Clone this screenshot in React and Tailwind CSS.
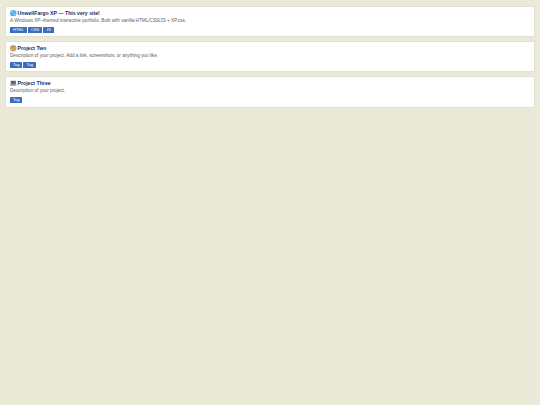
const PROJECTS = [
  {
    title: 'UnwellFargo XP — This very site!',
    icon: 'globe',
    text: 'A Windows XP–themed interactive portfolio. Built with vanilla HTML/CSS/JS + XP.css.',
    tags: ['HTML', 'CSS', 'JS'],
  },
  {
    title: 'Project Two',
    icon: 'palette',
    text: 'Description of your project. Add a link, screenshots, or anything you like.',
    tags: ['Tag', 'Tag'],
  },
  {
    title: 'Project Three',
    icon: 'laptop',
    text: 'Description of your project.',
    tags: ['Tag'],
  },
]

function ProjectIcon({ name }) {
  if (name === 'globe') {
    return (
      <svg width="6.5" height="6.5" viewBox="0 0 16 16">
        <circle cx="8" cy="8" r="8" fill="#5aa9e6" />
        <path d="M3 4l4-2 2 2-2 3-3 1zM9 9l4-1 1 2-3 4-2-2z" fill="#8fd0f0" />
      </svg>
    )
  }
  if (name === 'palette') {
    return (
      <svg width="6.5" height="6.5" viewBox="0 0 16 16">
        <circle cx="8" cy="8" r="8" fill="#e0a060" />
        <circle cx="5" cy="5" r="2" fill="#c96a4a" />
        <circle cx="10" cy="4" r="1.6" fill="#5f8fc0" />
        <circle cx="12" cy="9" r="1.6" fill="#7fae5a" />
      </svg>
    )
  }
  return (
    <svg width="6.5" height="6.5" viewBox="0 0 16 16">
      <rect x="2" y="2" width="12" height="9" fill="#3a4250" />
      <rect x="3" y="3" width="10" height="7" fill="#5a6a80" />
      <rect x="0" y="11" width="16" height="3" fill="#8a909a" />
    </svg>
  )
}

function ProjectCard({ project }) {
  return (
    <section className="flex h-[31.5px] flex-col border border-[#e2e0d2] bg-white px-[4px] pt-[3px]">
      <h2 className="flex h-[7px] items-center gap-[1px] text-[5.2px] font-bold leading-[7px] text-[#1a2a62]">
        <ProjectIcon name={project.icon} />
        {project.title}
      </h2>
      <p className="mt-[1.25px] text-[4.65px] leading-[6px] text-[#5c5c5c]">{project.text}</p>
      <div className="mt-[2.75px] flex gap-[1px]">
        {project.tags.map((tag, index) => (
          <span key={index} className="rounded-[0.5px] bg-[#3a6dbd] px-[3px] text-[4px] leading-[6px] text-white">
            {tag}
          </span>
        ))}
      </div>
    </section>
  )
}

export default function App() {
  return (
    <main
      className="flex min-h-[405px] flex-col gap-[3.75px] bg-[#ebe9d8] px-[5px] pt-[5.5px]"
      style={{ fontFamily: '"Liberation Sans", Arial, sans-serif' }}
    >
      {PROJECTS.map((project) => (
        <ProjectCard key={project.title} project={project} />
      ))}
    </main>
  )
}
